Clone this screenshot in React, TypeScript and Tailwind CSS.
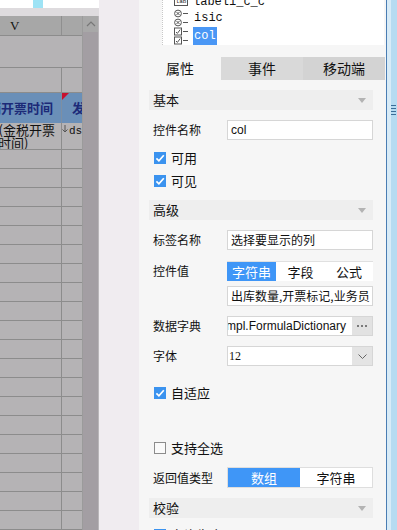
import React from 'react'

const CJK = "font-['Microsoft_YaHei','Noto_Sans_CJK_SC','Noto_Sans',sans-serif]"

function Tri() {
  return (
    <svg width="8" height="5" viewBox="0 0 8 5">
      <polygon points="0,0 8,0 4,5" fill="#b3b3b3" />
    </svg>
  )
}

function Header({ title }: { title: string }) {
  return (
    <div className="flex h-[20px] items-center justify-between bg-[#eeeeee] pl-[4px] pr-[7px] text-[13px] text-[#111]">
      <span>{title}</span>
      <Tri />
    </div>
  )
}

function Check({ on, label }: { on: boolean; label: string }) {
  return (
    <div className="flex h-[23px] items-center pl-[5px]">
      {on ? (
        <span className="grid h-[12px] w-[12px] place-items-center bg-[#3b93ef]">
          <svg viewBox="0 0 12 12" className="h-[12px] w-[12px]">
            <path d="M2.4 6.3 L4.9 8.8 L9.8 3.2" stroke="white" strokeWidth="1.7" fill="none" />
          </svg>
        </span>
      ) : (
        <span className="h-[12px] w-[12px] border border-[#8c8c8c] bg-[#fafafa]" />
      )}
      <span className="ml-[5px] text-[13px] leading-none text-[#111]">{label}</span>
    </div>
  )
}

function Label({ text }: { text: string }) {
  return <div className="w-[78px] shrink-0 pl-[4px] text-[12px] text-[#111]">{text}</div>
}

function Field({ children, className = '' }: { children: React.ReactNode; className?: string }) {
  return (
    <div
      className={`flex h-full min-w-0 flex-1 items-center overflow-hidden border border-[#d6d6d6] bg-white px-[3px] text-[12px] whitespace-nowrap text-[#111] ${className}`}
    >
      {children}
    </div>
  )
}

function CircleIcon() {
  return (
    <svg width="15" height="9" viewBox="0 0 15 9">
      <circle cx="4" cy="4.5" r="3.4" fill="white" stroke="#555" strokeWidth="1" />
      <path d="M2.4 2.9 L5.6 6.1 M5.6 2.9 L2.4 6.1" stroke="#555" strokeWidth="1" />
      <path d="M9 4.5 H14" stroke="#555" strokeWidth="1" />
    </svg>
  )
}

function BoxIcon() {
  return (
    <svg width="15" height="9" viewBox="0 0 15 9">
      <rect x="0.5" y="1" width="7" height="7" fill="white" stroke="#555" strokeWidth="1" />
      <path d="M2 5 L3.4 6.4 L6.2 2.6" stroke="#555" strokeWidth="1" fill="none" />
      <path d="M9 4.5 H14" stroke="#555" strokeWidth="1" />
    </svg>
  )
}

function GridRow({ h, split = true, children }: { h: string; split?: boolean; children?: React.ReactNode }) {
  return (
    <div className={`flex shrink-0 border-b border-[#8c8c8c] ${h}`}>
      <div className={`w-[62px] ${split ? 'border-r border-[#8c8c8c]' : ''}`}>{children}</div>
      <div className="flex-1" />
    </div>
  )
}

export default function App() {
  return (
    <div className={`flex h-[530px] w-[397px] overflow-hidden bg-[#f0ecf0] ${CJK}`}>
      {/* spreadsheet behind */}
      <div className="flex w-[99px] shrink-0 flex-col">
        <div className="flex h-[11px] bg-white">
          <div className="ml-[33px] w-[10px] bg-[#9ee3f5]" />
        </div>
        <div className="h-[11px] bg-[#dedbde]" />
        <div className="flex flex-1">
          <div className="flex w-[82px] flex-col overflow-hidden bg-[#b5b3b5]">
            <div className="flex h-[20px] shrink-0 border-b border-[#8c8c8c] bg-[#a7a7a7]">
              <div className="flex w-[62px] items-center border-r border-[#8f8f8f] pl-[10px] font-['Liberation_Serif',serif] text-[13px] text-[#111]">
                V
              </div>
            </div>
            <GridRow h="h-[32px]" split={false} />
            <GridRow h="h-[25px]" />
            <div className="flex h-[30px] shrink-0 bg-[#6a8fb8]">
              <div className="relative flex w-[62px] items-center justify-end overflow-hidden border-r border-[#7d8fa3] pr-[8px] text-[13px] font-bold whitespace-nowrap text-[#1c2a78]">
                销开票时间
              </div>
              <div className="relative flex flex-1 items-center overflow-hidden pl-[10px] text-[13px] font-bold text-[#1c2a78]">
                <svg className="absolute top-0 left-0" width="7" height="7" viewBox="0 0 7 7">
                  <polygon points="0,0 7,0 0,7" fill="#c8102e" />
                </svg>
                发
              </div>
            </div>
            <div className="flex h-[27px] shrink-0 border-b border-[#8c8c8c]">
              <div className="flex w-[62px] flex-col overflow-hidden border-r border-[#8c8c8c] text-[13px] leading-[12px] whitespace-nowrap text-[#111]">
                <div className="flex justify-end pt-[1px] pr-[6px]">票号(金税开票</div>
                <div className="mt-[1px] ml-[-2px]">时间)</div>
              </div>
              <div className="relative flex-1 overflow-hidden pl-[7px] font-['Liberation_Mono',monospace] text-[11px] leading-[16px] text-[#111]">
                ds:
                <svg className="absolute top-[2px] left-[0px]" width="6" height="8" viewBox="0 0 6 8">
                  <path d="M3 0 V7 M0.5 4.5 L3 7 L5.5 4.5" stroke="#555" strokeWidth="1" fill="none" />
                </svg>
              </div>
            </div>
            {Array.from({ length: 20 }, (_, i) => (
              <GridRow key={i} h="h-[19px]" />
            ))}
          </div>
          <div className="flex w-[16px] flex-col border-l border-[#9b9b9b] bg-[#a39ea3]">
            <div className="grid h-[16px] place-items-center bg-[#a8a8a8]">
              <svg width="10" height="6" viewBox="0 0 10 6">
                <path d="M1 5 L5 1 L9 5" stroke="#777" strokeWidth="1.2" fill="none" />
              </svg>
            </div>
          </div>
          <div className="w-[1px] bg-[#b9b6b9]" />
        </div>
      </div>

      <div className="w-[40px] shrink-0 bg-[#f0ecf0]" />

      {/* property panel */}
      <div className="flex w-[247px] shrink-0 flex-col bg-[#f6f6f6]">
        <div className="h-[57px] shrink-0 pl-[23px]">
          <div className="h-[45px] w-[222px] overflow-hidden border-l border-dotted border-[#c8c8c8] bg-white pl-[11px] font-['Liberation_Mono',monospace] text-[12px] text-[#111]">
            <div className="mt-[-6px] flex h-[15px] items-center">
              <span className="mr-[5px] flex h-[9px] w-[14px] items-center justify-center border border-[#555] text-[6px] leading-none">
                lab
              </span>
              <span>label1_c_c</span>
            </div>
            <div className="flex h-[18px] items-center">
              <div className="flex flex-col">
                <CircleIcon />
                <CircleIcon />
              </div>
              <span className="ml-[5px]">isic</span>
            </div>
            <div className="flex h-[18px] items-center">
              <div className="flex flex-col">
                <BoxIcon />
                <BoxIcon />
              </div>
              <span className="ml-[4px] flex h-[18px] items-center bg-[#4a97f5] px-[1px] text-white">col</span>
            </div>
          </div>
        </div>

        <div className="flex h-[23px] shrink-0 text-[14px] text-[#111]">
          <div className="grid w-[82px] place-items-center bg-[#f6f6f6]">属性</div>
          <div className="grid w-[82px] place-items-center bg-[#d9d9d9]">事件</div>
          <div className="grid w-[82px] place-items-center bg-[#d3d3d3]">移动端</div>
        </div>

        <div className="flex w-[234px] flex-col pt-[10px] pl-[10px]">
          <Header title="基本" />
          <div className="mt-[10px] flex h-[20px] items-center">
            <Label text="控件名称" />
            <Field className="font-['Liberation_Sans',sans-serif] text-[#1a1a5c]">col</Field>
          </div>
          <div className="mt-[6px]">
            <Check on label="可用" />
            <Check on label="可见" />
          </div>

          <div className="mt-[8px]">
            <Header title="高级" />
          </div>
          <div className="mt-[10px] flex h-[20px] items-center">
            <Label text="标签名称" />
            <Field>选择要显示的列</Field>
          </div>
          <div className="mt-[11px] flex h-[20px] items-center">
            <Label text="控件值" />
            <div className="flex h-full flex-1 border-t border-[#e0e0e0] bg-white text-[13px] text-[#111]">
              <div className="grid w-[49px] place-items-center bg-[#3f96f7] text-white">字符串</div>
              <div className="grid w-[49px] place-items-center">字段</div>
              <div className="grid flex-1 place-items-center">公式</div>
            </div>
          </div>
          <div className="mt-[5px] flex h-[20px] items-center pl-[78px]">
            <Field>出库数量,开票标记,业务员</Field>
          </div>
          <div className="mt-[10px] flex h-[20px] items-center">
            <Label text="数据字典" />
            <div className="flex h-full min-w-0 flex-1 overflow-hidden border border-[#d6d6d6] bg-white">
              <div className="flex min-w-0 flex-1 items-center overflow-hidden font-['Liberation_Sans',sans-serif] text-[12px] whitespace-nowrap text-[#111]">
                <span className="ml-[-2px]">mpl.FormulaDictionary</span>
              </div>
              <div className="flex w-[20px] shrink-0 items-center justify-center gap-[2px] bg-[#e2e2e2]">
                <span className="h-[2px] w-[2px] bg-[#7a7a7a]" />
                <span className="h-[2px] w-[2px] bg-[#7a7a7a]" />
                <span className="h-[2px] w-[2px] bg-[#7a7a7a]" />
              </div>
            </div>
          </div>
          <div className="mt-[10px] flex h-[20px] items-center">
            <Label text="字体" />
            <div className="flex h-full flex-1 border border-[#d6d6d6] bg-white">
              <div className="flex flex-1 items-center pl-[1px] font-['Liberation_Serif',serif] text-[12px] text-[#111]">12</div>
              <div className="grid w-[20px] place-items-center bg-[#e4e4e4]">
                <svg width="9" height="5" viewBox="0 0 9 5">
                  <path d="M0.5 0.5 L4.5 4.5 L8.5 0.5" stroke="#666" strokeWidth="1" fill="none" />
                </svg>
              </div>
            </div>
          </div>
          <div className="mt-[15px]">
            <Check on label="自适应" />
          </div>
          <div className="mt-[32px]">
            <Check on={false} label="支持全选" />
          </div>
          <div className="mt-[8px] flex h-[21px] items-center">
            <Label text="返回值类型" />
            <div className="flex h-full flex-1 border border-[#dedede] bg-white text-[13px] text-[#111]">
              <div className="grid w-[72px] place-items-center bg-[#3f96f7] text-white">数组</div>
              <div className="grid flex-1 place-items-center">字符串</div>
            </div>
          </div>
          <div className="mt-[10px]">
            <Header title="校验" />
          </div>
          <div className="mt-[5px]">
            <Check on label="允许为空" />
          </div>
        </div>
      </div>

      {/* right edge scrollbar */}
      <div className="w-[1px] shrink-0 bg-[#4a7db3]" />
      <div className="flex w-[10px] shrink-0 bg-[#b6dbf1]">
        <div className="w-[4px] bg-[#d8ebf7]" />
        <div className="flex flex-1 flex-col">
          <div className="mt-[105px] flex flex-col gap-[2px] pr-[1px]">
            <div className="h-[1px] bg-[#3b6d98]" />
            <div className="h-[1px] bg-[#3b6d98]" />
            <div className="h-[1px] bg-[#3b6d98]" />
            <div className="h-[1px] bg-[#3b6d98]" />
          </div>
        </div>
      </div>
    </div>
  )
}
